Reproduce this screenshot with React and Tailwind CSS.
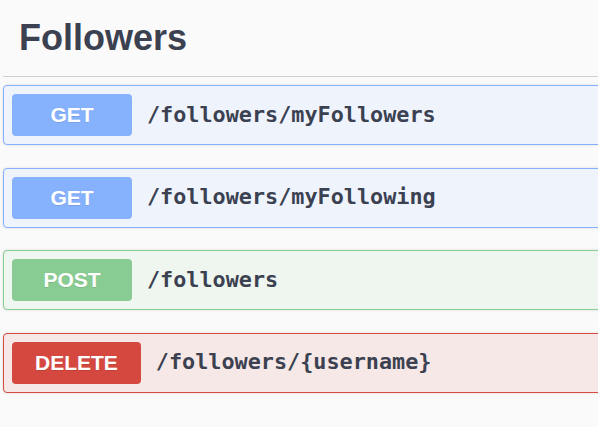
const ops = [
  {
    method: "GET",
    path: "/followers/myFollowers",
    box: "bg-[#eef3fc] border-[#86b0fd]",
    badge: "bg-[#86b1fd]",
  },
  {
    method: "GET",
    path: "/followers/myFollowing",
    box: "bg-[#eef3fc] border-[#86b0fd]",
    badge: "bg-[#86b1fd]",
  },
  {
    method: "POST",
    path: "/followers",
    box: "bg-[#eff6ef] border-[#89cd96]",
    badge: "bg-[#88cc93]",
  },
  {
    method: "DELETE",
    path: "/followers/{username}",
    box: "bg-[#f6e8e7] border-[#d64a42]",
    badge: "bg-[#d44840]",
  },
];

export default function App() {
  return (
    <div className="w-[598px] h-[427px] overflow-hidden bg-[#fafafa] text-[#3b4151]">
      <div className="w-[660px] pl-[3px]">
        <div className="h-[77px] pt-[17px] pl-[16px] border-b border-[#cfcfcf]">
          <h3 className="text-[36px] font-bold leading-[1.15] [font-family:'Liberation_Sans',Arial,sans-serif]">
            Followers
          </h3>
        </div>
        <div className="mt-[8px] flex flex-col gap-[22.6px]">
          {ops.map((op, i) => (
            <div
              key={i}
              className={`flex items-center p-[8px] border rounded-[4px] shadow-[0_0_3px_rgba(0,0,0,0.12)] ${op.box}`}
            >
              <span
                className={`min-w-[120px] h-[42px] px-[23px] flex items-center justify-center rounded-[4px] text-white text-[21px] font-bold [text-shadow:0_1px_0_rgba(0,0,0,0.1)] [font-family:'Liberation_Sans',Arial,sans-serif] ${op.badge}`}
              >
                {op.method}
              </span>
              <span className="pl-[15px] text-[21.8px] font-bold [font-family:'DejaVu_Sans_Mono',monospace]">
                {op.path}
              </span>
            </div>
          ))}
        </div>
      </div>
    </div>
  );
}
